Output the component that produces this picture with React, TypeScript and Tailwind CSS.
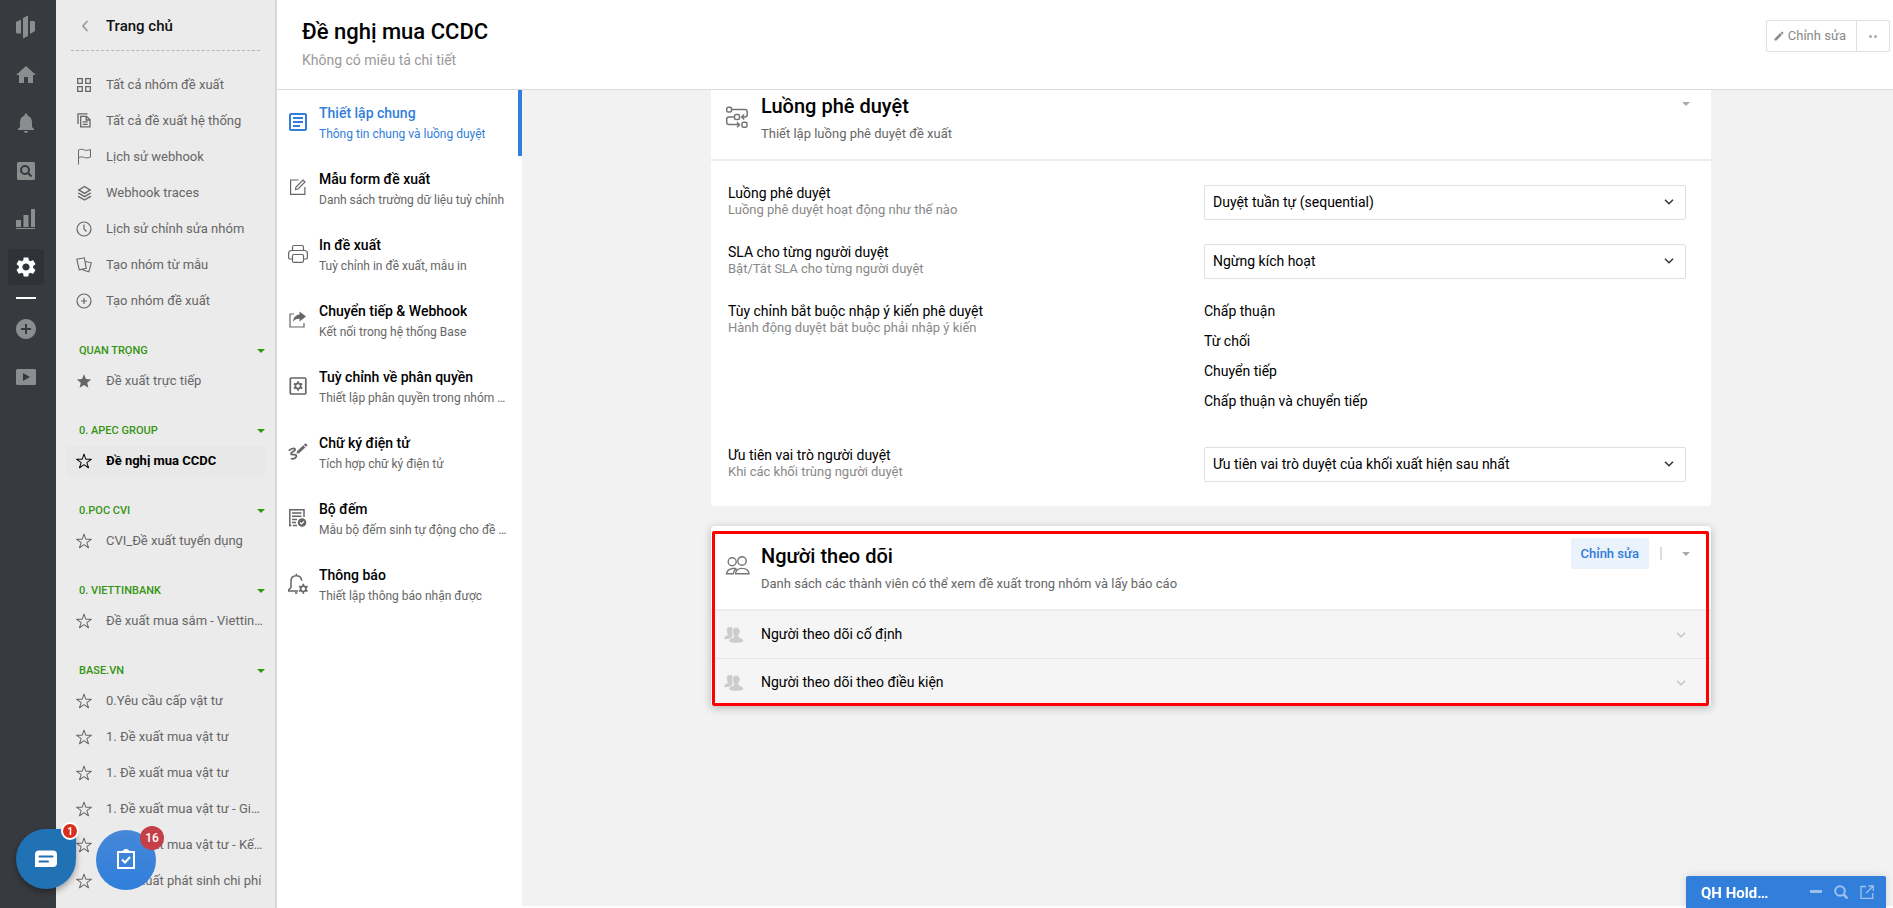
import type { ReactNode } from 'react'
import clsx from 'clsx'
import { MdHome, MdNotifications, MdSettings, MdAddCircle, MdEdit, MdOutlineArticle } from 'react-icons/md'
import { IoIosStarOutline, IoMdStar } from 'react-icons/io'
import { RiStackLine } from 'react-icons/ri'

const LogoIcon = () => (
  <svg width="20" height="24" viewBox="0 0 20 24" fill="currentColor">
    <path d="M0 7l5-2.500v14H1.500A1.500 1.500 0 0 1 0 17zM7 3l5-2.500v20.500l-5 2.500zM14 6h3.500A1.500 1.500 0 0 1 19 7.500V16l-5 3z" />
  </svg>
)

const SearchBoxIcon = () => (
  <svg width="18" height="18" viewBox="0 0 18 18">
    <rect width="18" height="18" rx="1.500" fill="currentColor" />
    <circle cx="8" cy="8" r="4" fill="none" stroke="#35393e" strokeWidth="2" />
    <path d="M11 11l3.500 3.500" stroke="#35393e" strokeWidth="2" />
  </svg>
)

const ChartIcon = () => (
  <svg width="20" height="20" viewBox="0 0 20 20" fill="currentColor">
    <path d="M0 11h5v7H0zM7.500 6h5v12h-5zM15 0h4v18h-4zM0 19h19v1H0z" />
  </svg>
)

const PlayIcon = () => (
  <svg width="20" height="16" viewBox="0 0 20 16">
    <rect width="20" height="16" rx="1.500" fill="currentColor" />
    <path d="M7 4l7 4-7 4z" fill="#35393e" />
  </svg>
)

const GridIcon = () => (
  <svg width="16" height="16" viewBox="0 0 16 16" fill="none" stroke="currentColor" strokeWidth="1.300">
    <path d="M1.700 1.700h4.600v4.600H1.700zM9.700 1.700h4.600v4.600H9.700zM1.700 9.700h4.600v4.600H1.700zM9.700 9.700h4.600v4.600H9.700z" />
  </svg>
)

const CopyIcon = () => (
  <svg width="16" height="16" viewBox="0 0 16 16" fill="none" stroke="currentColor" strokeWidth="1.300">
    <path d="M2 11V.8h9.500" />
    <path d="M4.700 3.300h5.800L14 6.800V13.800H4.700zM10.200 3.300V7H14M6.700 8.800h5M6.700 11.300h5" />
  </svg>
)

const FlagIcon = () => (
  <svg width="16" height="18" viewBox="0 0 16 18" fill="none" stroke="currentColor">
    <path d="M2.500 16.500V2c3-1.500 4.500-.5 6 0s3.500.6 6-.5V9c-2.500 1.200-4.500 1-6 .5s-3-1-6 0" />
  </svg>
)

const ClockIcon = () => (
  <svg width="16" height="16" viewBox="0 0 16 16" fill="none" stroke="currentColor" strokeWidth="1.200">
    <circle cx="8" cy="8" r="7" />
    <path d="M8 3.500V8l2.500 2.500" />
  </svg>
)

const CardsIcon = () => (
  <svg width="16" height="16" viewBox="0 0 16 16" fill="none" stroke="currentColor" strokeWidth="1.100">
    <path d="M.8 2.200L8.300.8l2 10.500-7 1.500z" />
    <path d="M9.300 4.500l6 1.300-2.500 9-5.800-1.800.3-1" />
  </svg>
)

const PlusCircleIcon = () => (
  <svg width="16" height="16" viewBox="0 0 16 16" fill="none" stroke="currentColor" strokeWidth="1.200">
    <circle cx="8" cy="8" r="7" />
    <path d="M8 5v6M5 8h6" />
  </svg>
)

const FormIcon = () => (
  <svg width="20" height="20" viewBox="0 0 20 20" fill="none" stroke="currentColor" strokeWidth="1.200">
    <path d="M10.500 2H2.600v14.400h14.300V9" />
    <path d="M7.500 11.500l.5-2.500L15 2l2 2-7 7z" />
  </svg>
)

const PrinterIcon = () => (
  <svg width="20" height="20" viewBox="0 0 20 20" fill="none" stroke="currentColor" strokeWidth="1.200">
    <path d="M4.500 6.500V3q0-1.500 1.500-1.500h8q1.500 0 1.500 1.500v3.500" />
    <path d="M4.500 15H2.200Q.6 15 .6 13.400V9.500q0-3 3-3h12.800q3 0 3 3v3.900q0 1.600-1.600 1.600h-2.300" />
    <rect x="4.500" y="10.500" width="11" height="7.900" rx="1.500" />
  </svg>
)

const ShareIcon = () => (
  <svg width="20" height="20" viewBox="0 0 20 20">
    <path d="M6 4H2v13h14v-4" fill="none" stroke="currentColor" strokeWidth="1.200" />
    <path d="M11.500 1.500L18 6.500l-6.500 5V8.700C8.500 8.500 6.500 9.500 5 12c.3-4.500 2.500-7 6.500-7.500z" fill="currentColor" />
  </svg>
)

const SettingBoxIcon = () => (
  <svg width="20" height="20" viewBox="0 0 20 20" fill="none" stroke="currentColor">
    <rect x="2.300" y="2" width="15.500" height="16" rx="1" strokeWidth="1.700" />
    <circle cx="10" cy="10" r="2.600" strokeWidth="1.600" />
    <path d="M10 5.200v2M10 12.800v2M5.900 7.600l1.700 1M12.500 11.400l1.700 1M5.900 12.400l1.700-1M12.500 8.600l1.700-1" strokeWidth="1.800" />
  </svg>
)

const SignIcon = () => (
  <svg width="20" height="20" viewBox="0 0 20 20" fill="none" stroke="currentColor">
    <path
      d="M.8 8.700C2 7.200 6 5.600 6.900 6.900c1.300 2-4 2.900-3.900 4.900.2 1.900 4.300 0 5.200 1.500.9 1.700-1.900 4.500-5.400 3.200"
      strokeWidth="1.800"
    />
    <path d="M10 10.200l6.300-5.800" strokeWidth="2.900" />
    <path d="M16.900 3.800l1.700-1.600" strokeWidth="2.900" />
    <path d="M8.600 11.500l2.600-.3-2.200-2.200z" fill="currentColor" stroke="none" />
  </svg>
)

const CounterIcon = () => (
  <svg width="20" height="20" viewBox="0 0 20 20" fill="none" stroke="currentColor">
    <path d="M16 9V1.800H1.800V17M1 17.500h2.500M5 17.500h4M4 5h9.500M4 8.200h9.500M4 11.500h5M4 14.500h4" strokeWidth="1.500" />
    <circle cx="14" cy="14.500" r="4.300" fill="currentColor" stroke="none" />
    <path d="M12 14.500l1.500 1.500 2.500-2.700" stroke="#fff" strokeWidth="1.200" />
  </svg>
)

const BellGearIcon = () => (
  <svg width="20" height="22" viewBox="0 0 20 22" fill="none" stroke="currentColor">
    <path d="M10 18H.8v-1.200L3 14.500V8.500c0-3.500 2.200-5.700 5.300-5.700s5.200 2 5.400 5M8.300 3V.8M7 20h2.500" strokeWidth="1.500" />
    <circle cx="15.300" cy="15.800" r="2.700" strokeWidth="1.700" />
    <path d="M15.300 10.800v2M15.300 18.800v2M11 13.300l1.800 1M17.800 17.300l1.800 1M11 18.300l1.800-1M17.800 14.300l1.800-1" strokeWidth="1.700" />
  </svg>
)

const FlowIcon = () => (
  <svg width="24" height="24" viewBox="0 0 24 24" fill="none" stroke="currentColor" strokeWidth="1.500">
    <rect x="1.700" y="2.200" width="4.800" height="4.800" rx="1.500" />
    <rect x="9.500" y="9.500" width="5" height="5" rx="1.500" />
    <rect x="17" y="17.200" width="5" height="5" rx="1.500" />
    <path d="M6.500 4.500H20q2.200 0 2.200 2.200v3Q22.200 12 20 12h-3M19.200 9.500L16.700 12l2.500 2.500M9.500 12H4q-2.300 0-2.300 2.300v3q0 2.300 2.300 2.300h9.500M12 17.200l2.500 2.500-2.500 2.500" />
  </svg>
)

const FollowersIcon = () => (
  <svg width="26" height="22" viewBox="0 0 26 22" fill="none" stroke="currentColor" strokeWidth="1.400">
    <circle cx="7.200" cy="6.800" r="4" />
    <circle cx="17" cy="6" r="4.200" />
    <path d="M10.500 13.300c-5 0-8.500 1-9 5.500h6.700c.3-2.500 1.500-4.300 3.300-5.500M10.500 18.800c.3-3.800 3-5.400 6.500-5.400s6.700 1.500 7 5.400z" />
  </svg>
)

const GroupIcon = () => (
  <svg width="20" height="16" viewBox="0 0 20 16" fill="currentColor">
    <path d="M6 0c2 0 3 1 3 1-1.500 1.500-1.500 5.500 0 7.500l-2 2.300L5 12H0c0-2.500 2-3 3.500-3.700.7-.4.600-1 .2-1.600C2.300 4.500 2.300 0 6 0z" />
    <path
      d="M12.200.6c2.800 0 4 2 3.700 4.400-.2 1.600-.8 2.600-1.400 3.400-.3 1 0 1.600 1 2 2 .8 3.700 1.300 4 4.200-3 2-12 2-14.500 0 .3-2.900 2-3.400 4-4.200 1-.4 1.200-1 .9-2C9.200 7.600 8.700 6.600 8.500 5 8.200 2.600 9.400.6 12.200.6z"
      stroke="#f5f5f5"
      strokeWidth="0.600"
    />
  </svg>
)

const Chevron = ({ className }: { className?: string }) => (
  <svg className={className} width="10" height="6" viewBox="0 0 10 6" fill="none" stroke="currentColor" strokeWidth="1.500">
    <path d="M1 .7l4 4 4-4" />
  </svg>
)

const Caret = () => (
  <svg width="8" height="4" viewBox="0 0 8 4" fill="currentColor">
    <path d="M0 0h8L4 4z" />
  </svg>
)

const mainLinks = [
  { label: 'Tất cả nhóm đề xuất', icon: <GridIcon /> },
  { label: 'Tất cả đề xuất hệ thống', icon: <CopyIcon /> },
  { label: 'Lịch sử webhook', icon: <FlagIcon /> },
  { label: 'Webhook traces', icon: <RiStackLine size={17} /> },
  { label: 'Lịch sử chỉnh sửa nhóm', icon: <ClockIcon /> },
  { label: 'Tạo nhóm từ mẫu', icon: <CardsIcon /> },
  { label: 'Tạo nhóm đề xuất', icon: <PlusCircleIcon /> },
]

const groups = [
  { title: 'QUAN TRỌNG', starred: true, items: ['Đề xuất trực tiếp'] },
  { title: '0. APEC GROUP', items: ['Đề nghị mua CCDC'] },
  { title: '0.POC CVI', items: ['CVI_Đề xuất tuyển dụng'] },
  { title: '0. VIETTINBANK', items: ['Đề xuất mua sắm - Viettin…'] },
  {
    title: 'BASE.VN',
    items: [
      '0.Yêu cầu cấp vật tư',
      '1. Đề xuất mua vật tư',
      '1. Đề xuất mua vật tư',
      '1. Đề xuất mua vật tư - Gi…',
      '1. Đề xuất mua vật tư - Kế…',
      '1. Đề xuất phát sinh chi phí',
    ],
  },
]

const tabs = [
  { title: 'Thiết lập chung', sub: 'Thông tin chung và luồng duyệt', icon: <MdOutlineArticle size={24} /> },
  { title: 'Mẫu form đề xuất', sub: 'Danh sách trường dữ liệu tuỳ chỉnh', icon: <FormIcon /> },
  { title: 'In đề xuất', sub: 'Tuỳ chỉnh in đề xuất, mẫu in', icon: <PrinterIcon /> },
  { title: 'Chuyển tiếp & Webhook', sub: 'Kết nối trong hệ thống Base', icon: <ShareIcon /> },
  { title: 'Tuỳ chỉnh về phân quyền', sub: 'Thiết lập phân quyền trong nhóm …', icon: <SettingBoxIcon /> },
  { title: 'Chữ ký điện tử', sub: 'Tích hợp chữ ký điện tử', icon: <SignIcon /> },
  { title: 'Bộ đếm', sub: 'Mẫu bộ đếm sinh tự động cho đề …', icon: <CounterIcon /> },
  { title: 'Thông báo', sub: 'Thiết lập thông báo nhận được', icon: <BellGearIcon /> },
]

const RailButton = ({ label, active, children }: { label: string; active?: boolean; children: ReactNode }) => (
  <button
    aria-label={label}
    className={clsx(
      'my-1.5 flex size-9 items-center justify-center rounded',
      active ? 'bg-[#2f3237] text-white' : 'text-[#8c8d8e]',
    )}
  >
    {children}
  </button>
)

const Rail = () => (
  <nav className="flex w-14 shrink-0 flex-col bg-[#373a3f] pt-[3px] pl-2">
    <RailButton label="Base"><LogoIcon /></RailButton>
    <RailButton label="Trang chủ"><MdHome size={24} /></RailButton>
    <RailButton label="Thông báo"><MdNotifications size={24} /></RailButton>
    <RailButton label="Tìm kiếm"><SearchBoxIcon /></RailButton>
    <RailButton label="Báo cáo"><ChartIcon /></RailButton>
    <RailButton label="Cài đặt" active><MdSettings size={24} /></RailButton>
    <div className="mx-2 my-1.5 h-0.5 w-5 bg-white" />
    <RailButton label="Tạo mới"><MdAddCircle size={24} /></RailButton>
    <RailButton label="Video"><PlayIcon /></RailButton>
  </nav>
)

const SideLink = ({ icon, active, children }: { icon: ReactNode; active?: boolean; children: ReactNode }) => (
  <a
    href="#"
    className={clsx(
      'flex h-[30px] items-center rounded pl-[9px] text-[13px]',
      active ? 'bg-[#e8e8e8] font-bold text-black' : 'text-[#666]',
    )}
  >
    <span className="mr-[13px] flex w-[18px] shrink-0 justify-center">{icon}</span>
    <span className="truncate">{children}</span>
  </a>
)

const Sidebar = () => (
  <aside className="w-[221px] shrink-0 overflow-hidden border-r-2 border-[#d8d8d8] bg-[#ebebeb] px-2.5">
    <div className="mr-[5px] ml-[5px] flex h-[51px] items-center border-b border-dashed border-[#b5b5b5] pt-0.5 pl-2">
      <svg width="12" height="12" viewBox="0 0 12 12" fill="none" stroke="#999" strokeWidth="1.700">
        <path d="M8.500 1L4 6l4.500 5" />
      </svg>
      <span className="ml-[15px] text-[15px] font-medium text-[#111]">Trang chủ</span>
    </div>
    <div className="flex flex-col gap-1.5 pt-[19px] pb-[3px]">
      {mainLinks.map((link) => (
        <SideLink key={link.label} icon={link.icon}>{link.label}</SideLink>
      ))}
    </div>
    {groups.map((group) => (
      <section key={group.title} className="pt-5">
        <h3 className="flex h-6 items-center justify-between pl-[13px] text-[11px] font-medium text-[#359412]">
          {group.title}
          <Caret />
        </h3>
        <div className="flex flex-col gap-1.5 py-[3px]">
          {group.items.map((item, index) => (
            <SideLink
              key={index}
              active={item === 'Đề nghị mua CCDC'}
              icon={group.starred ? <IoMdStar size={18} /> : <IoIosStarOutline size={18} />}
            >
              {item}
            </SideLink>
          ))}
        </div>
      </section>
    ))}
  </aside>
)

const CardHeader = ({ icon, title, sub, children }: { icon: ReactNode; title: string; sub: string; children: ReactNode }) => (
  <div className="flex h-[85px] border-b-2 border-[#ececec] pr-[21px] pl-3.5">
    <span className="mt-[29px] w-9 shrink-0 text-[#757575]">{icon}</span>
    <div className="grow pt-4">
      <h2 className="text-xl leading-7 font-medium">{title}</h2>
      <p className="mt-1 text-[13px] leading-5 text-[#666]">{sub}</p>
    </div>
    <div className="mt-3 flex h-[31px] items-center text-[#aaa]">{children}</div>
  </div>
)

const Field = ({ id, label, sub, children }: { id?: string; label: string; sub: string; children: ReactNode }) => (
  <div className="grid grid-cols-[1fr_482px]">
    <div>
      <label htmlFor={id} className="block text-sm leading-4">{label}</label>
      <p className="mt-px text-[13px] leading-4 text-[#888]">{sub}</p>
    </div>
    {children}
  </div>
)

const SelectBox = ({ id, value }: { id: string; value: string }) => (
  <div className="relative">
    <select id={id} className="block h-[35px] w-full appearance-none rounded-xs border border-[#dfdfdf] bg-white px-2 pb-0.5 text-sm">
      <option>{value}</option>
    </select>
    <Chevron className="pointer-events-none absolute top-3.5 right-3 text-[#333]" />
  </div>
)

const ApprovalCard = () => (
  <section className="rounded bg-white">
    <CardHeader icon={<FlowIcon />} title="Luồng phê duyệt" sub="Thiết lập luồng phê duyệt đề xuất">
      <button aria-label="Thu gọn"><Caret /></button>
    </CardHeader>
    <div className="flex flex-col gap-6 py-6 pr-[25px] pl-[17px]">
      <Field id="flow" label="Luồng phê duyệt" sub="Luồng phê duyệt hoạt động như thế nào">
        <SelectBox id="flow" value="Duyệt tuần tự (sequential)" />
      </Field>
      <Field id="sla" label="SLA cho từng người duyệt" sub="Bật/Tắt SLA cho từng người duyệt">
        <SelectBox id="sla" value="Ngừng kích hoạt" />
      </Field>
      <Field label="Tùy chỉnh bắt buộc nhập ý kiến phê duyệt" sub="Hành động duyệt bắt buộc phải nhập ý kiến">
        <ul className="text-sm leading-4">
          {['Chấp thuận', 'Từ chối', 'Chuyển tiếp', 'Chấp thuận và chuyển tiếp'].map((action) => (
            <li key={action} className="mb-3.5">{action}</li>
          ))}
        </ul>
      </Field>
      <Field id="priority" label="Ưu tiên vai trò người duyệt" sub="Khi các khối trùng người duyệt">
        <SelectBox id="priority" value="Ưu tiên vai trò duyệt của khối xuất hiện sau nhất" />
      </Field>
    </div>
  </section>
)

const FollowersCard = () => (
  <section className="relative mt-5 rounded-t bg-white shadow-[0_2px_8px_rgba(0,0,0,0.25)]">
    <CardHeader
      icon={<FollowersIcon />}
      title="Người theo dõi"
      sub="Danh sách các thành viên có thể xem đề xuất trong nhóm và lấy báo cáo"
    >
      <button className="h-[31px] rounded-xs bg-[#eaf2fc] px-2.5 text-[13px] font-medium text-[#2f7bd9]">Chỉnh sửa</button>
      <span className="mr-5 ml-[11px] h-[13px] w-0.5 bg-[#dcdcdc]" />
      <button aria-label="Thu gọn"><Caret /></button>
    </CardHeader>
    {['Người theo dõi cố định', 'Người theo dõi theo điều kiện'].map((row, index) => (
      <button
        key={row}
        className={clsx(
          'flex w-full items-center bg-[#f5f5f5] pr-[25px] pl-[13px] text-left text-sm',
          index === 0 ? 'h-12 border-b border-[#e6e6e6]' : 'h-[47px]',
        )}
      >
        <span className="w-[37px] text-[#ccc]"><GroupIcon /></span>
        <span className="grow pb-0.5">{row}</span>
        <Chevron className="text-[#c4c4c4]" />
      </button>
    ))}
    <div className="pointer-events-none absolute top-[5px] right-0.5 bottom-0 left-px rounded-xs border-3 border-[#fe0000]" />
  </section>
)

const TabList = () => (
  <nav className="w-[245px] shrink-0 bg-white">
    {tabs.map((tab, index) => (
      <a
        key={tab.title}
        href="#"
        className={clsx(
          'flex h-[66px] items-center border-r-4 pl-[9px]',
          index === 0 ? 'border-[#317edc] text-[#317edc]' : 'border-transparent text-black',
        )}
      >
        <span className={clsx('flex w-6 shrink-0 justify-center pb-0.5', index > 0 && 'text-[#666]')}>{tab.icon}</span>
        <span className="ml-[9px] min-w-0">
          <span className="block truncate text-sm leading-5 font-medium">{tab.title}</span>
          <span className={clsx('mt-px block truncate text-xs leading-5', index > 0 && 'text-[#666]')}>{tab.sub}</span>
        </span>
      </a>
    ))}
  </nav>
)

const FloatingWidgets = () => (
  <>
    <button
      aria-label="Tin nhắn"
      className="fixed bottom-[19px] left-4 flex size-[60px] items-center justify-center rounded-full rounded-tr-lg bg-[#2171b5] shadow-[0_3px_6px_rgba(0,0,0,0.35)]"
    >
      <svg width="24" height="18" viewBox="0 0 24 18">
        <path d="M5 .5h14a4 4 0 0 1 4 4V13a4 4 0 0 1-4 4H1V4.500A4 4 0 0 1 5 .5z" fill="#fff" />
        <path d="M5.500 6.500h13M5.500 11.500h8.500" stroke="#2171b5" strokeWidth="2" strokeLinecap="round" />
      </svg>
      <span className="absolute -top-[7px] -right-[3px] flex size-[18px] items-center justify-center rounded-full border-2 border-white bg-[#dc2e1f] text-[10px] font-bold text-white">
        1
      </span>
    </button>
    <button
      aria-label="Công việc"
      className="fixed bottom-[18px] left-24 flex size-[60px] items-center justify-center rounded-full bg-linear-to-b from-[#4688d8] to-[#2f7edb]"
    >
      <svg width="20" height="22" viewBox="0 0 20 22" fill="none" stroke="#fff" strokeWidth="2">
        <path d="M2 3h16v16H2z" />
        <path d="M7 2.500l3-2 3 2" />
        <path d="M6 10.500l3 3 5-5.500" />
      </svg>
      <span className="absolute -top-1 -right-2 flex size-6 items-center justify-center rounded-full bg-[#c53f48] text-xs font-medium text-white">
        16
      </span>
    </button>
    <div className="fixed right-[7px] bottom-0 flex h-8 w-[200px] items-center rounded-t-xs bg-[#317edb] pr-3 pl-[15px] text-[#9dc1ee] shadow-[0_0_8px_rgba(0,0,0,0.12)]">
      <span className="grow pt-0.5 text-[15px] font-bold text-white">QH Hold…</span>
      <button aria-label="Thu nhỏ" className="mr-3">
        <svg width="12" height="14" viewBox="0 0 12 14"><path d="M0 6.500h12" stroke="currentColor" strokeWidth="3" /></svg>
      </button>
      <button aria-label="Tìm kiếm" className="mr-3">
        <svg width="14" height="14" viewBox="0 0 14 14" fill="none" stroke="currentColor" strokeWidth="2">
          <circle cx="6" cy="6" r="4.800" />
          <path d="M9.500 9.500l4 4" strokeWidth="2.500" />
        </svg>
      </button>
      <button aria-label="Mở rộng">
        <svg width="14" height="14" viewBox="0 0 14 14" fill="none" stroke="currentColor" strokeWidth="1.300">
          <path d="M6 1.500H1v11.800h11.800V8M8.500 1h4.800v4.800M13 1.300L6 8.300" />
        </svg>
      </button>
    </div>
  </>
)

export default function App() {
  return (
    <div className="flex h-screen overflow-hidden bg-white font-[Roboto,sans-serif] text-black">
      <Rail />
      <Sidebar />
      <div className="flex min-w-0 grow flex-col">
        <header className="flex h-[90px] shrink-0 justify-between border-b border-[#dcdcdc] pr-[3px] pl-[25px]">
          <div className="pt-[17px]">
            <h1 className="text-[22px] leading-[30px] font-medium">Đề nghị mua CCDC</h1>
            <p className="mt-[3px] text-sm leading-5 text-[#999]">Không có miêu tả chi tiết</p>
          </div>
          <div className="mt-5 flex h-8 rounded-xs border border-[#e0e0e0] text-[13px] text-[#888]">
            <button className="flex w-[90px] items-center justify-end gap-[3px] border-r border-[#e0e0e0] pr-2.5">
              <MdEdit size={12} />
              Chỉnh sửa
            </button>
            <button aria-label="Thêm" className="flex w-8 items-center justify-center gap-0.5">
              <span className="size-[3px] rounded-full bg-[#aaa]" />
              <span className="size-[3px] rounded-full bg-[#aaa]" />
            </button>
          </div>
        </header>
        <div className="flex min-h-0 grow">
          <TabList />
          <main className="mb-0.5 min-w-0 grow overflow-hidden bg-[#f2f2f2] pl-[7px]">
            <div className="mx-auto -mt-3.5 max-w-[1000px]">
              <ApprovalCard />
              <FollowersCard />
            </div>
          </main>
        </div>
      </div>
      <FloatingWidgets />
    </div>
  )
}
